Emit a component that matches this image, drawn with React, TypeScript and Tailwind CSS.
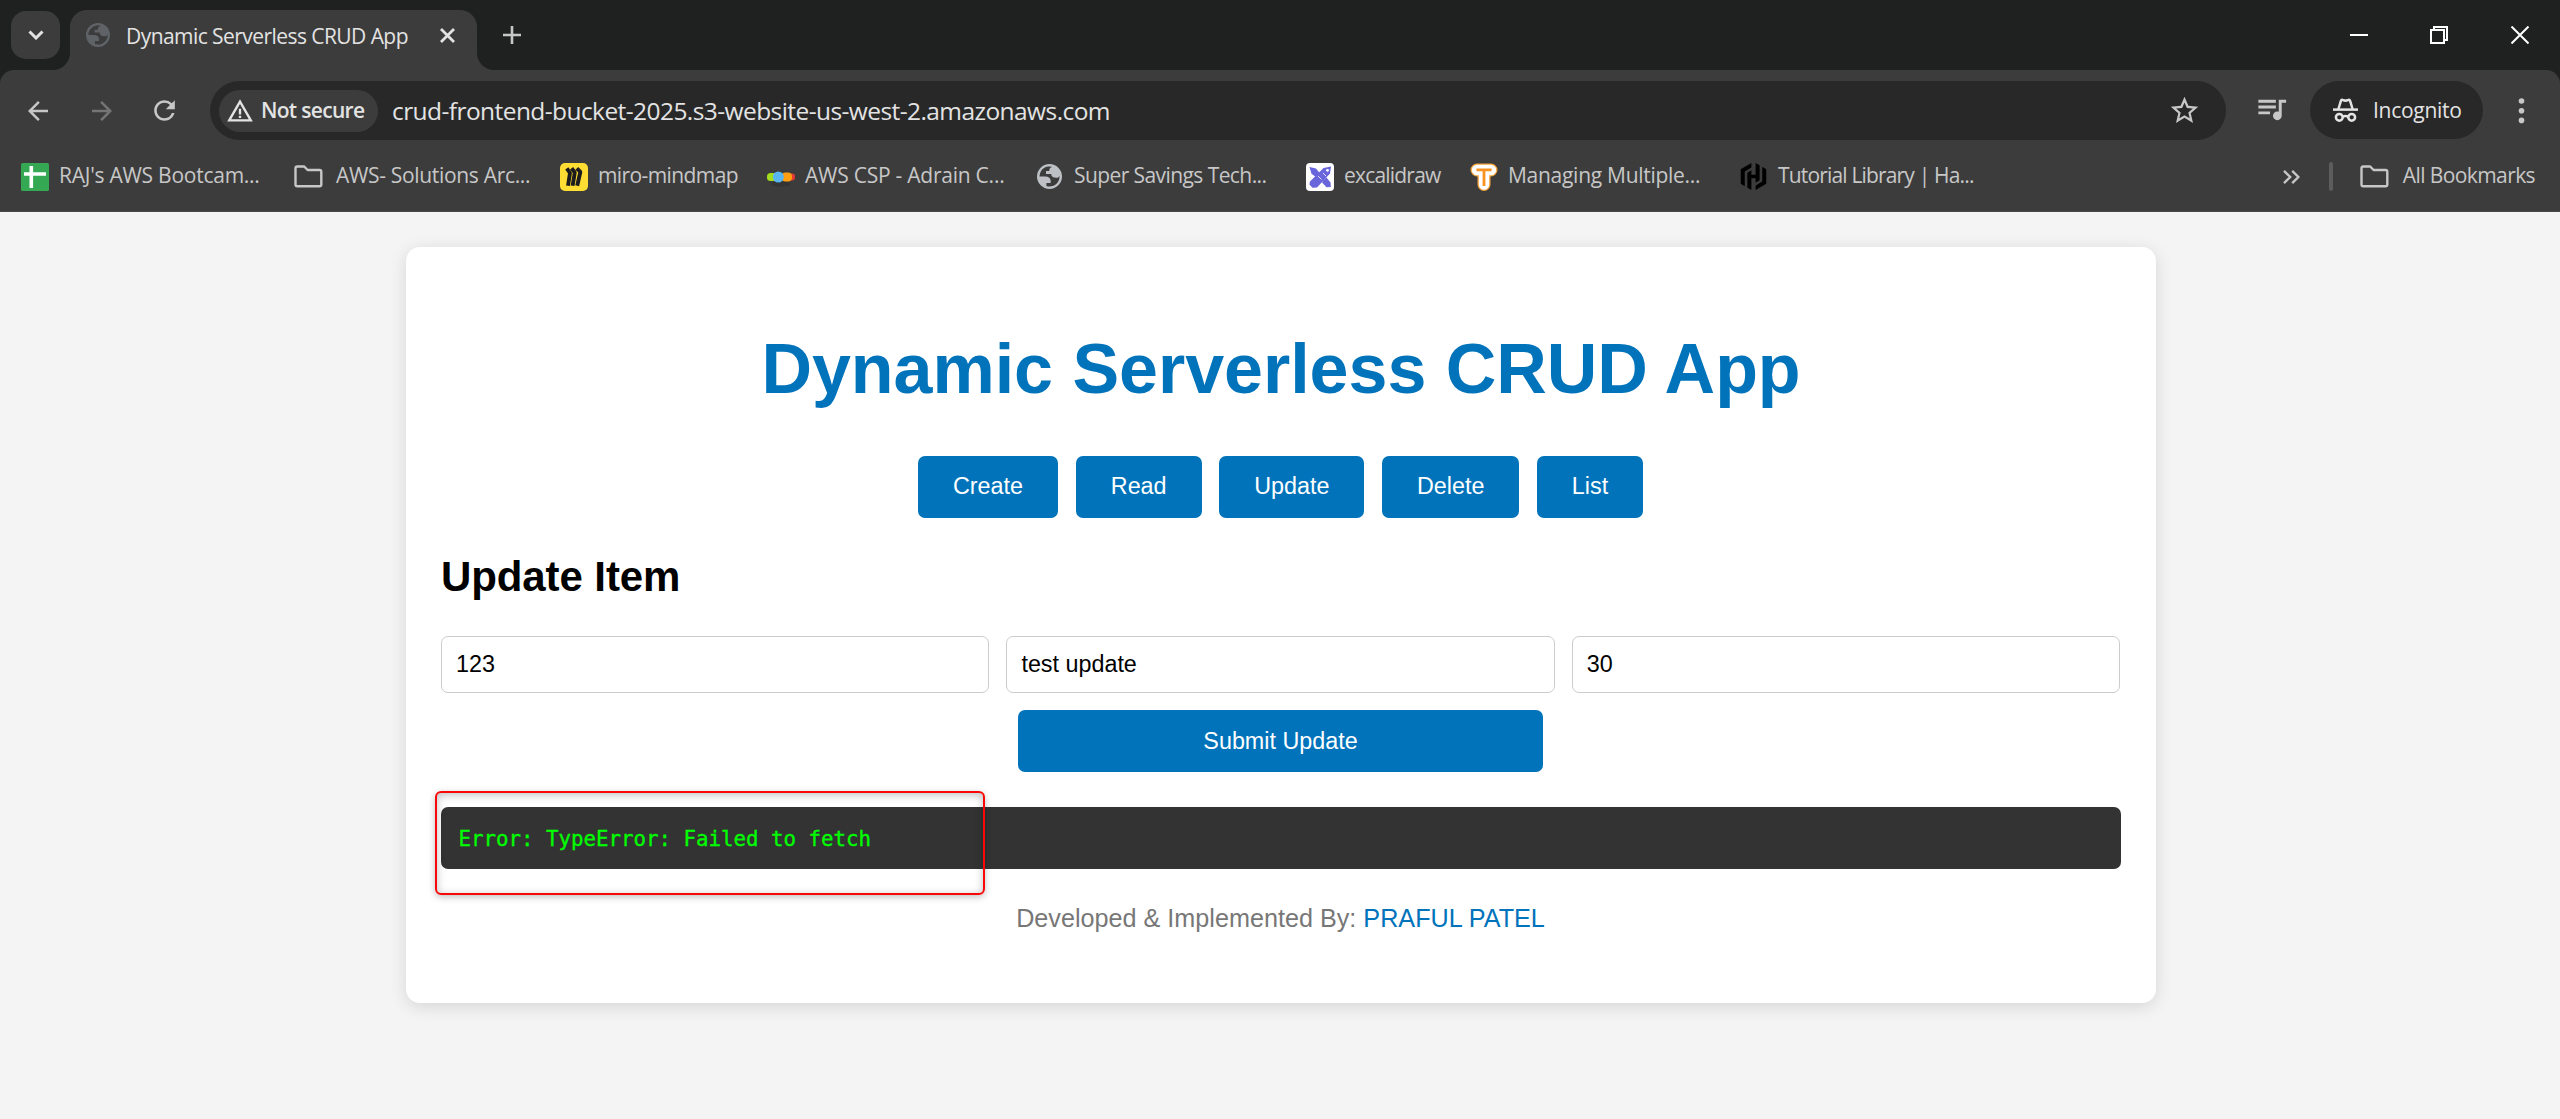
import type { ReactNode } from "react";
import { MdArrowBack, MdArrowForward, MdRefresh, MdWarningAmber, MdStarOutline, MdQueueMusic } from "react-icons/md";
import { SiHashicorp } from "react-icons/si";

function Globe({ className }: { className: string }) {
  return (
    <svg viewBox="2 2 20 20" fill="currentColor" fillRule="evenodd" className={className}>
      <path d="M12 2a10 10 0 1 0 0 20 10 10 0 0 0 0-20ZM4 12h4.4c3.4 0 4.9 1.7 4.5 5.1H9.5v2.5A8 8 0 0 0 20 11.5C19.4 12.6 18.6 13 17.5 13 14.7 13 13.4 12 13.4 10H9.2V7.6h2.6C11.8 5.4 12.7 4.4 14.6 4.4A8 8 0 0 0 4 12Z" />
    </svg>
  );
}

function Folder() {
  return (
    <svg width="29" height="23" viewBox="0 0 29 23" fill="none" stroke="#c7c7c7" strokeWidth="2.4" strokeLinejoin="round">
      <path d="M1.5 3.2Q1.5 1.5 3.2 1.5H10.2L13.6 5H25.6Q27.3 5 27.3 6.7V19.6Q27.3 21.3 25.6 21.3H3.2Q1.5 21.3 1.5 19.6Z" />
    </svg>
  );
}

function Sheets() {
  return (
    <svg width="28" height="28" viewBox="0 0 28 28">
      <rect width="28" height="28" rx="1.5" fill="#34a853" />
      <path d="M3 11H25M10.3 3V25" stroke="#fff" strokeWidth="3.6" />
    </svg>
  );
}

function Miro() {
  return (
    <svg width="28" height="28" viewBox="0 0 28 28">
      <rect width="28" height="28" rx="5" fill="#ffdd33" />
      <g fill="none" stroke="#1c1c1e" strokeWidth="3.9" strokeLinejoin="bevel">
        <path d="M6.8 5.3L10 10L8 22.7" />
        <path d="M11.6 5.3L14.8 9.5L12.6 22.7" />
        <path d="M16.8 5.3L20.4 8.8L17.2 22.7" />
      </g>
    </svg>
  );
}

function Pills() {
  return (
    <svg width="28" height="28" viewBox="0 0 28 28">
      <ellipse cx="14" cy="21" rx="10" ry="2.5" fill="#343434" />
      <rect x="22" y="10.5" width="6" height="7" rx="3" fill="#e53935" />
      <rect x="0" y="10" width="10" height="8" rx="3.5" fill="#a4dd1c" />
      <rect x="14.5" y="9.6" width="10.5" height="8.8" rx="4" fill="#ff9f0f" />
      <circle cx="11.3" cy="14" r="5.5" fill="#58b5f0" />
    </svg>
  );
}

function Excalidraw() {
  return (
    <svg width="28" height="28" viewBox="0 0 28 28">
      <rect width="28" height="28" rx="4" fill="#fff" />
      <g fill="#6965db">
        <path d="M3.5 4L10 5.5L14 10.5L10.8 14.8L5.5 10.8Z" />
        <path d="M25 3.5L24 10.5L11 24.5L6.5 24.8L3.4 21.5L4 18.5L17.5 5Z" />
        <path d="M17.5 17L20.5 14.5L24.5 19.5L24.8 24L20.5 24.2L16 19.6Z" />
      </g>
      <circle cx="21.5" cy="7.3" r="1.4" fill="#fff" />
      <path d="M12 13L15.5 16.5M17 10L20 13" stroke="#fff" strokeWidth="0.8" />
    </svg>
  );
}

function OutlinedTee() {
  return (
    <svg width="28" height="28" viewBox="0 0 28 28" fill="none" strokeLinecap="round" strokeLinejoin="round">
      <path d="M7 7H21M14 7V21.5" stroke="#f5a33b" strokeWidth="13" />
      <path d="M7 7H21M14 7V21.5" stroke="#fff" strokeWidth="10.4" />
      <path d="M7.8 6.9H20.2M14 7V21.5" stroke="#f7931e" strokeWidth="2.8" strokeLinecap="square" />
    </svg>
  );
}

function Incognito() {
  return (
    <svg width="25" height="25" viewBox="0 0 25 25" fill="none" stroke="#e3e3e3" strokeWidth="2.5">
      <path d="M0 11.6H25" />
      <path d="M5.4 11L7.9 2.9Q8.3 1.5 9.7 2L12.5 2.8L15.3 2Q16.7 1.5 17.1 2.9L19.6 11" strokeLinejoin="round" />
      <circle cx="6.3" cy="19.3" r="3.4" />
      <circle cx="18.7" cy="19.3" r="3.4" />
      <path d="M9.5 18.8Q12.5 17.4 15.5 18.8" />
    </svg>
  );
}

function Bookmark({ icon, label, className }: { icon: ReactNode; label: string; className: string }) {
  return (
    <div className="flex h-[29px] items-center">
      <span className="flex shrink-0 items-center">{icon}</span>
      <span className={"-mt-[4px] block whitespace-nowrap leading-[28px] " + className}>{label}</span>
    </div>
  );
}

function TabStrip() {
  return (
    <div className="flex h-[70px] items-start bg-[#1f2120] pl-[11px]">
      <button className="mt-[11px] flex h-[48px] w-[49px] items-center justify-center rounded-[15px] bg-[#3c3c3c]">
        <svg width="16" height="10" viewBox="0 0 16 10" fill="none" stroke="#e3e3e3" strokeWidth="3">
          <path d="M1.5 1.5L8 8L14.5 1.5" />
        </svg>
      </button>
      <div className="relative ml-[10px] mt-[10px] flex h-[60px] w-[407px] items-start rounded-t-[17px] bg-[#3c3c3c]">
        <svg className="absolute -left-[17px] bottom-0" width="17" height="17" viewBox="0 0 17 17" fill="#3c3c3c">
          <path d="M17 0V17H0A17 17 0 0 0 17 0Z" />
        </svg>
        <svg className="absolute -right-[17px] bottom-0" width="17" height="17" viewBox="0 0 17 17" fill="#3c3c3c">
          <path d="M0 0V17H17A17 17 0 0 1 0 0Z" />
        </svg>
        <Globe className="ml-[16px] mt-[13px] size-[24px] shrink-0 text-[#5f6368]" />
        <span className="ml-[16px] mt-[12px] w-[298px] whitespace-nowrap text-[21px] leading-[28px] tracking-[-0.56px] text-[#e3e3e3]">
          Dynamic Serverless CRUD App
        </span>
        <svg className="ml-[16px] mt-[18px] shrink-0" width="15" height="15" viewBox="0 0 15 15" stroke="#e3e3e3" strokeWidth="2.8">
          <path d="M1 1L14 14M14 1L1 14" />
        </svg>
      </div>
      <svg className="ml-[26px] mt-[26px]" width="18" height="18" viewBox="0 0 18 18" stroke="#c7c7c7" strokeWidth="2.6">
        <path d="M0 9H18M9 0V18" />
      </svg>
      <div className="ml-auto mr-[31px] mt-[26px] flex items-center">
        <svg width="18" height="18" viewBox="0 0 18 18" stroke="#fff" strokeWidth="2">
          <path d="M0 9H18" />
        </svg>
        <svg className="ml-[62px] mr-[63px]" width="18" height="18" viewBox="0 0 18 18" fill="none" stroke="#fff" strokeWidth="2">
          <path d="M1 4H14V17H1Z" />
          <path d="M4 4V1H17V14H14" />
        </svg>
        <svg width="18" height="18" viewBox="0 0 18 18" stroke="#fff" strokeWidth="2">
          <path d="M0.5 0.5L17.5 17.5M17.5 0.5L0.5 17.5" />
        </svg>
      </div>
    </div>
  );
}

function AddressRow() {
  return (
    <div className="flex h-[81px] items-start pt-[11px]">
      <div className="flex h-[59px] w-[210px] shrink-0 items-center pl-[23px]">
        <MdArrowBack className="size-[30px] text-[#c7c7c7]" />
        <MdArrowForward className="ml-[34px] size-[30px] text-[#757575]" />
        <MdRefresh className="ml-[32px] size-[31px] text-[#c7c7c7]" />
      </div>
      <div className="flex h-[59px] w-[2016px] shrink-0 items-center rounded-full bg-[#282828] pl-[9px] pr-[25px]">
        <div className="flex h-[42px] w-[159px] items-center rounded-full bg-[#3c3c3c] pl-[7px]">
          <MdWarningAmber className="size-[28px] text-[#e3e3e3]" />
          <span className="-mt-[1px] ml-[7px] whitespace-nowrap text-[21px] font-semibold leading-[28px] tracking-[-0.7px] text-[#e3e3e3]">
            Not secure
          </span>
        </div>
        <span className="ml-[14px] whitespace-nowrap text-[24.5px] leading-[33px] tracking-[-0.57px] text-[#e3e3e3]">
          crud-frontend-bucket-2025.s3-website-us-west-2.amazonaws.com
        </span>
        <MdStarOutline className="ml-auto size-[33px] text-[#c7c7c7]" />
      </div>
      <MdQueueMusic className="ml-[28px] mt-[10px] size-[35px] shrink-0 text-[#c7c7c7]" />
      <div className="ml-[21px] flex h-[58px] w-[173px] shrink-0 items-center rounded-full bg-[#282828] pl-[23px]">
        <Incognito />
        <span className="-mt-[1px] ml-[15px] whitespace-nowrap text-[21px] leading-[28px] tracking-[-0.28px] text-[#e3e3e3]">Incognito</span>
      </div>
      <svg className="ml-[35px] mt-[17px] shrink-0" width="7" height="26" viewBox="0 0 7 26" fill="#c7c7c7">
        <circle cx="3.5" cy="3" r="2.8" />
        <circle cx="3.5" cy="12.7" r="2.8" />
        <circle cx="3.5" cy="22.4" r="2.8" />
      </svg>
    </div>
  );
}

function BookmarksRow() {
  return (
    <div className="flex h-[61px] items-start border-b border-[#4a4a4a] pt-[11px] text-[21px] text-[#c7c7c7]">
      <div className="w-[273px] shrink-0 pl-[21px]">
        <Bookmark icon={<Sheets />} label="RAJ's AWS Bootcam..." className="ml-[10px] tracking-[-0.25px]" />
      </div>
      <div className="w-[287px] shrink-0 pl-[21px]">
        <Bookmark icon={<Folder />} label="AWS- Solutions Arc..." className="ml-[13px] tracking-[-0.32px]" />
      </div>
      <div className="w-[207px] shrink-0">
        <Bookmark icon={<Miro />} label="miro-mindmap" className="ml-[10px] tracking-[-0.6px]" />
      </div>
      <div className="w-[270px] shrink-0">
        <Bookmark icon={<Pills />} label="AWS CSP - Adrain C..." className="ml-[10px] tracking-[-0.24px]" />
      </div>
      <div className="w-[269px] shrink-0">
        <Bookmark icon={<Globe className="size-[25px] text-[#bdc1c6]" />} label="Super Savings Tech..." className="ml-[12px] tracking-[-0.58px]" />
      </div>
      <div className="w-[164px] shrink-0">
        <Bookmark icon={<Excalidraw />} label="excalidraw" className="ml-[10px] tracking-[-0.8px]" />
      </div>
      <div className="w-[270px] shrink-0">
        <Bookmark icon={<OutlinedTee />} label="Managing Multiple..." className="ml-[10px] tracking-[-0.28px]" />
      </div>
      <Bookmark icon={<SiHashicorp className="size-[27px] text-black" />} label="Tutorial Library | Ha..." className="ml-[11px] tracking-[-0.83px]" />
      <div className="ml-auto mr-[25px] flex h-[29px] shrink-0 items-center">
        <svg width="17" height="14" viewBox="0 0 17 14" fill="none" stroke="#c7c7c7" strokeWidth="2.4">
          <path d="M1 0.9L7.2 7L1 13.1M9.2 0.9L15.4 7L9.2 13.1" />
        </svg>
        <span className="ml-[29px] mr-[27px] h-[29px] w-[4px] rounded-full bg-[#5c5c5c]" />
        <Bookmark icon={<Folder />} label="All Bookmarks" className="ml-[14px] tracking-[-0.6px]" />
      </div>
    </div>
  );
}

const actions = [
  { label: "Create", width: "w-[140px]" },
  { label: "Read", width: "w-[125.8px]" },
  { label: "Update", width: "w-[145px]" },
  { label: "Delete", width: "w-[137px]" },
  { label: "List", width: "w-[106px]" },
];

const fields = ["123", "test update", "30"];

export default function App() {
  return (
    <div className="flex h-[1119px] w-[2560px] flex-col overflow-hidden bg-[#f4f4f4]">
      <header className="h-[212px] shrink-0 bg-[#1f2120] font-['Open_Sans',sans-serif]">
        <TabStrip />
        <div className="rounded-t-[14px] bg-[#3c3c3c]">
          <AddressRow />
          <BookmarksRow />
        </div>
      </header>

      <main className="ml-[406px] mt-[35px] h-[756px] w-[1750px] rounded-[14px] bg-white px-[35px] font-['Liberation_Sans',Arial,sans-serif] shadow-[0_3.5px_17.5px_rgba(0,0,0,0.12)]">
        <h1 className="pt-[82px] text-center text-[70px] font-bold leading-[80px] tracking-[-0.03px] text-[#0073bb]">Dynamic Serverless CRUD App</h1>
        <div className="mr-[1px] mt-[47px] flex justify-center gap-[17.8px]">
          {actions.map((a) => (
            <button key={a.label} className={"h-[62px] shrink-0 rounded-[7px] bg-[#0073bb] pb-[2px] text-[23.33px] leading-[27px] text-white " + a.width}>
              {a.label}
            </button>
          ))}
        </div>
        <h2 className="mt-[35px] text-[42px] font-bold leading-[48px] tracking-[-0.1px] text-black">Update Item</h2>
        <div className="mr-[1px] mt-[35px] grid grid-cols-3 gap-[17.25px]">
          {fields.map((v) => (
            <input key={v} readOnly value={v} className="h-[57px] min-w-0 rounded-[7px] border border-[#cccccc] bg-white px-[14px] text-[23.33px] leading-[27px] text-black outline-none" />
          ))}
        </div>
        <div className="mr-[1px] mt-[17px] flex justify-center">
          <button className="h-[62px] w-[525px] rounded-[7px] bg-[#0073bb] text-[23.33px] leading-[27px] text-white">Submit Update</button>
        </div>
        <div className="relative mt-[35px] h-[62px]">
          <pre className="h-full rounded-[7px] bg-[#333333] px-[17.5px] pt-[18px] font-['DejaVu_Sans_Mono',monospace] text-[20.78px] leading-[28px] text-[#00ff00] [-webkit-text-stroke:0.3px_#00ff00]">
            Error: TypeError: Failed to fetch
          </pre>
          <div className="absolute -left-[6px] -top-[16px] h-[104px] w-[550px] rounded-[6px] border-[2.5px] border-[#f90808] shadow-[0_2px_7px_rgba(0,0,0,0.25),inset_0_2px_9px_rgba(0,0,0,0.25)]" />
        </div>
        <footer className="mr-[1px] mt-[35px] text-center text-[25.2px] leading-[29px] text-[#777777]">
          Developed &amp; Implemented By: <a className="text-[#0073bb]">PRAFUL PATEL</a>
        </footer>
      </main>
    </div>
  );
}
